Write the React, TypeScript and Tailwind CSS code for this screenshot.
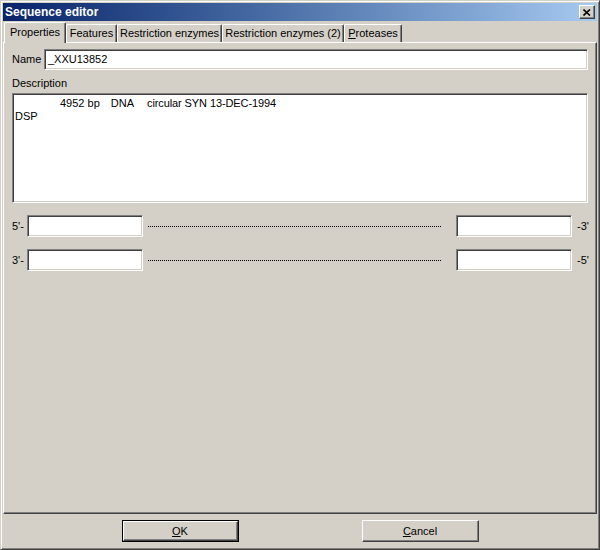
import React from "react";

const sunken =
  "border border-t-[#808080] border-l-[#808080] border-b-white border-r-white shadow-[inset_1px_1px_0_#404040,inset_-1px_-1px_0_#d4d0c8] bg-white";

function Field({ className = "", value = "" }: { className?: string; value?: string }) {
  return (
    <div className={`${sunken} h-[21px] shrink-0 flex items-center pl-[3px] text-black ${className}`}>
      {value}
    </div>
  );
}

function Tab({ label, underline, width, active }: { label: string; underline?: boolean; width: string; active?: boolean }) {
  const base =
    "shrink-0 flex items-center justify-center border-t border-l border-t-white border-l-white border-r border-r-[#404040] shadow-[inset_-1px_0_0_#808080] rounded-t-[2px] bg-[#d4d0c8] text-black";
  return (
    <div
      className={
        active
          ? `${base} relative z-10 h-[21px] -mb-px ml-px pb-[2px] w-[62px]`
          : `${base} h-[18px] ${width}`
      }
    >
      {underline ? (
        <span>
          <span className="underline">{label[0]}</span>
          {label.slice(1)}
        </span>
      ) : (
        label
      )}
    </div>
  );
}

function StrandRow({ left, right }: { left: string; right: string }) {
  return (
    <div className="flex items-center h-[22px]">
      <span className="w-[15px] shrink-0">{left}</span>
      <Field className="w-[116px] h-[22px]" />
      <div className="ml-[5px] w-[293px] shrink-0 border-t border-dotted border-black" />
      <Field className="ml-[15px] w-[116px] h-[22px]" />
      <span className="ml-[5px]">{right}</span>
    </div>
  );
}

export default function App() {
  return (
    <div
      className="w-[600px] h-[550px] bg-[#d4d0c8] border border-t-[#d4d0c8] border-l-[#d4d0c8] border-b-[#404040] border-r-[#404040] shadow-[inset_1px_1px_0_white,inset_-1px_-1px_0_#808080] p-[2px] flex flex-col text-[11px] text-black"
      style={{ fontFamily: '"Liberation Sans", Arial, sans-serif' }}
    >
      {/* title bar */}
      <div className="h-[18px] flex items-center justify-between bg-gradient-to-r from-[#0a246a] to-[#a6caf0] pl-[2px] pr-[2px]">
        <span className="text-white font-bold text-[12px]">Sequence editor</span>
        <div className="w-[16px] h-[14px] bg-[#d4d0c8] border border-t-white border-l-white border-b-[#404040] border-r-[#404040] shadow-[inset_-1px_-1px_0_#808080] flex items-center justify-center">
          <svg width="8" height="7" viewBox="0 0 8 7">
            <path d="M0.5 0.5 L7 6.5 M7 0.5 L0.5 6.5" stroke="black" strokeWidth="1.6" />
          </svg>
        </div>
      </div>

      {/* tabs */}
      <div className="flex items-end h-[21px]">
        <Tab label="Properties" width="" active />
        <Tab label="Features" width="w-[51px]" />
        <Tab label="Restriction enzymes" width="w-[105px]" />
        <Tab label="Restriction enzymes (2)" width="w-[122px]" />
        <Tab label="Proteases" width="w-[58px]" underline />
      </div>

      {/* panel */}
      <div className="h-[472px] border border-t-white border-l-white border-b-[#404040] border-r-[#404040] shadow-[inset_-1px_-1px_0_#808080] pl-[8px] pr-[8px] pt-[6px]">
        <div className="flex items-center">
          <span className="w-[32px]">Name</span>
          <Field className="flex-1 shrink" value="_XXU13852" />
        </div>
        <div className="mt-[6px] h-[15px] leading-[15px]">Description</div>
        <div className={`${sunken} mt-[2px] h-[110px] pl-[2px] pt-[3px] leading-[13px]`}>
          <div className="flex">
            <span className="ml-[45px]">4952 bp</span>
            <span className="ml-[11px]">DNA</span>
            <span className="ml-[13px] tracking-[-0.1px]">circular SYN 13-DEC-1994</span>
          </div>
          <div>DSP</div>
        </div>
        <div className="mt-[12px] flex flex-col gap-[12px]">
          <StrandRow left="5'-" right="-3'" />
          <StrandRow left="3'-" right="-5'" />
        </div>
      </div>

      {/* buttons */}
      <div className="flex justify-center gap-[123px] pt-[6px]">
        <div className="w-[117px] h-[22px] border border-black">
          <div className="w-full h-full border border-t-white border-l-white border-b-[#404040] border-r-[#404040] shadow-[inset_-1px_-1px_0_#808080] flex items-center justify-center">
            <span>
              <span className="underline">O</span>K
            </span>
          </div>
        </div>
        <div className="w-[117px] h-[22px] border border-t-white border-l-white border-b-[#404040] border-r-[#404040] shadow-[inset_-1px_-1px_0_#808080] flex items-center justify-center">
          <span>
            <span className="underline">C</span>ancel
          </span>
        </div>
      </div>
    </div>
  );
}
